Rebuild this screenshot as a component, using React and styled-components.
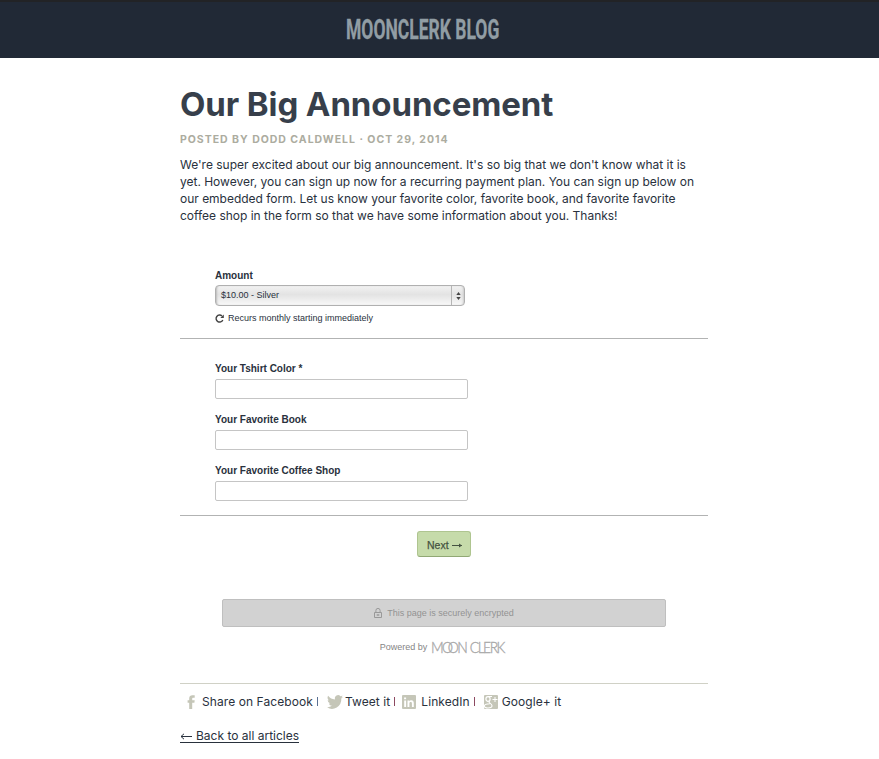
import React from 'react';
import styled, { createGlobalStyle } from 'styled-components';

const GlobalStyle = createGlobalStyle`
  * { box-sizing: border-box; }
  body { margin: 0; background: #fff; color: #29313d; font-family: Inter, sans-serif; }
  h1, p { margin: 0; }
`;

const helvetica = '"Liberation Sans", Arial, sans-serif';

const Header = styled.header`
  height: 58px;
  padding: 0 33px 1px 0;
  display: flex;
  align-items: center;
  justify-content: center;
  background: #212936;
  border-top: 2px solid #222326;
`;

const BlogName = styled.span`
  color: #919da4;
  font: 700 28px/55px Roboto, sans-serif;
  white-space: nowrap;
  -webkit-text-stroke: 0.3px #919da4;
  transform: scaleX(0.625);
`;

const Article = styled.main`
  width: 528px;
  margin-left: 180px;
  padding-top: 25px;
`;

const Title = styled.h1`
  font-size: 33px;
  font-weight: 700;
  line-height: 42px;
  letter-spacing: -0.1px;
  color: #373f4b;
`;

const Meta = styled.p`
  margin-top: 7px;
  color: #acaca0;
  font-size: 10.5px;
  font-weight: 700;
  line-height: 16px;
  letter-spacing: 0.98px;
`;

const Copy = styled.p`
  margin-top: 8px;
  font-size: 12px;
  line-height: 17px;
  letter-spacing: -0.012px;
  white-space: nowrap;
`;

const Section = styled.section`
  height: ${(p) => p.$height}px;
  padding: ${(p) => p.$top}px 35px 0;
  border-bottom: 1px solid #b2b3b3;
  font-family: ${helvetica};
`;

const Form = styled.form`
  margin-top: 38px;
`;

const Label = styled.label`
  display: block;
  font-size: 10px;
  font-weight: 700;
  line-height: 14px;
`;

const SelectBox = styled.div`
  display: flex;
  width: 250px;
  height: 21px;
  margin-top: 2px;
  border: 1px solid #b0b0b0;
  border-radius: 4px;
  background: linear-gradient(#f2f2f2, #e3e3e3 45%, #f8f8f8);
  box-shadow: inset 2px 0 2px -1px #bbb, inset -2px 0 2px -1px #ccc;
`;

const SelectValue = styled.span`
  flex: 1;
  padding-left: 5px;
  font-size: 9px;
  line-height: 18px;
`;

const Stepper = styled.span`
  display: flex;
  width: 13px;
  align-items: center;
  justify-content: center;
  border-left: 1px solid #b5b5b5;
`;

const Recurrence = styled.p`
  display: flex;
  align-items: center;
  gap: 4px;
  margin-top: 6px;
  font-size: 9px;
  line-height: 12px;
`;

const Field = styled.div`
  height: 51px;
`;

const TextInput = styled.input`
  display: block;
  width: 253px;
  height: 20px;
  margin: 3px 0 0;
  padding: 0 5px;
  border: 1px solid #c5c5c5;
  border-radius: 2px;
  background: #fff;
  font: 9px ${helvetica};
`;

const Actions = styled.div`
  display: flex;
  flex-direction: column;
  align-items: center;
  height: 167px;
  padding-top: 15px;
  font-family: ${helvetica};
`;

const NextButton = styled.button`
  display: flex;
  align-items: center;
  gap: 3px;
  width: 54px;
  height: 26px;
  padding: 2px 9px 0;
  border: 1px solid #afc590;
  border-bottom-color: #91a875;
  border-radius: 3px;
  background: #c6dbaa;
  color: #455341;
  font: 400 10.5px ${helvetica};
  -webkit-text-stroke: 0.25px #455341;
`;

const SecureBar = styled.div`
  display: flex;
  align-items: center;
  justify-content: center;
  gap: 5px;
  width: 444px;
  height: 28px;
  margin-top: 42px;
  border: 1px solid #bfbfbf;
  border-radius: 2px;
  background: #d2d2d2;
  color: #929292;
  font-size: 9px;
`;

const Powered = styled.div`
  display: flex;
  align-items: center;
  gap: 4px;
  height: 16px;
  margin-top: 12px;
  color: #858585;
  font-size: 9px;
`;

const Wordmark = styled.span`
  display: flex;
  gap: 4px;
  margin-right: -4px;
  color: #a8a8a8;
  font: 300 15.5px/16px Lato, sans-serif;
  letter-spacing: -1.75px;
  -webkit-text-stroke: 0.35px #a8a8a8;
  transform: scaleX(0.9);
  transform-origin: left center;
`;

const Tight = styled.span`
  letter-spacing: -6px;
`;

const ShareRow = styled.nav`
  display: flex;
  align-items: center;
  height: 36px;
  padding-left: 7px;
  border-top: 1px solid #d0d1c6;
  font-size: 12px;
  letter-spacing: 0.08px;
  white-space: nowrap;
`;

const ShareLink = styled.a`
  display: flex;
  align-items: center;
  gap: ${(p) => p.$gap}px;
`;

const Bar = styled.i`
  width: 1px;
  height: 9px;
  margin: 0 ${(p) => p.$after}px 0 ${(p) => p.$before}px;
  background: ${(p) => p.$color};
`;

const BackLink = styled.a`
  display: inline-flex;
  align-items: center;
  gap: 4px;
  height: 14px;
  margin-top: 10px;
  padding-top: 1px;
  border-bottom: 1px solid #29313d;
  font-size: 12px;
  line-height: 14px;
  white-space: nowrap;
`;

const Icon = styled.svg`
  display: block;
  flex: none;
  overflow: visible;
`;

const questions = ['Your Tshirt Color *', 'Your Favorite Book', 'Your Favorite Coffee Shop'];

function StepIcon() {
  return (
    <Icon width="5" height="8" viewBox="0 0 5 8" fill="#444">
      <path d="M2.5 0 4.7 3H.3zM.3 5h4.4L2.5 8z" />
    </Icon>
  );
}

function RepeatIcon() {
  return (
    <Icon width="9" height="9" viewBox="0 0 9 9">
      <path d="M7 2A3.5 3.5 0 1 0 7.8 6" fill="none" stroke="#444" strokeWidth="1.4" />
      <path d="M8.8.4v3.5H5.3z" fill="#444" />
    </Icon>
  );
}

function LockIcon() {
  return (
    <Icon width="8" height="11" viewBox="0 0 8 11" fill="none" stroke="#999">
      <path d="M1.9 4.2V2.5a2.1 2.1 0 0 1 4.2 0v1.7M.5 4.5h7v5h-7z" />
      <path d="M2.7 7h2.6" strokeWidth="1.4" />
    </Icon>
  );
}

function ArrowIcon({ width, color, back }) {
  return (
    <Icon width={width} height="6" viewBox={`0 0 ${width} 6`} fill="none" stroke={color}>
      <path d={back ? `M${width} 3.5H1M4 .8 1 3.5 4 6.2` : `M0 3.5h${width}`} />
      {!back && <path d={`M${width - 3} 1.5 ${width} 3.5 ${width - 3} 5.5z`} fill={color} stroke="none" />}
    </Icon>
  );
}

function FacebookIcon() {
  return (
    <Icon width="8" height="14" viewBox="0 0 8 14" fill="#c5c6b8">
      <path d="M2.2 14V7.7H.6V5.2h1.6V3.5C2.2 1.3 3.4.2 5.4.2h2.3v2.6H6.3c-.8 0-1.1.3-1.1 1v1.4h2.5l-.3 2.5H5.2V14z" />
    </Icon>
  );
}

function TwitterIcon() {
  return (
    <Icon width="16" height="14" viewBox="0 2 24 20" preserveAspectRatio="none" fill="#c5c6b8">
      <path d="M24 4.6a10 10 0 0 1-2.8.8 5 5 0 0 0 2.1-2.7 10 10 0 0 1-3.1 1.2 4.9 4.9 0 0 0-8.4 4.5A14 14 0 0 1 1.7 3.1a4.9 4.9 0 0 0 1.5 6.6 5 5 0 0 1-2.2-.6v.1a4.9 4.9 0 0 0 3.9 4.8 5 5 0 0 1-2.2.1 4.9 4.9 0 0 0 4.6 3.4A10 10 0 0 1 0 19.5 14 14 0 0 0 21.5 7z" />
    </Icon>
  );
}

function LinkedInIcon() {
  return (
    <Icon width="14" height="14" viewBox="0 0 14 14">
      <rect width="14" height="14" rx="1" fill="#c5c6b8" />
      <path d="M2.2 5.5h1.9V12H2.2zM2.1 2.4h2v1.9h-2zM5.5 5.5h1.8v.9c.9-1.6 4.5-1.5 4.5 1.5V12H9.9V8.4c0-1.8-2.5-1.7-2.5 0V12H5.5z" fill="#fff" />
    </Icon>
  );
}

function GooglePlusIcon() {
  return (
    <Icon width="14" height="14" viewBox="0 0 14 14">
      <path d="M0 1q0-1 1-1h12q1 0 1 1v12q0 1-1 1H1q-1 0-1-1z" fill="#c5c6b8" />
      <g fill="none" stroke="#fff">
        <ellipse cx="4" cy="4" rx="2.1" ry="2.4" strokeWidth="1.2" />
        <path d="M4 1.5h4M5.6 6.2C3.6 8 8.1 8.3 8 10.7 8 13.6 0 13.8.3 11 .5 8.8 3.7 8.8 5.8 8.8" strokeWidth="1.1" />
        <path d="M11 2v5M8.5 4.5h5" />
      </g>
    </Icon>
  );
}

export default function App() {
  return (
    <>
      <GlobalStyle />
      <Header><BlogName>MOONCLERK BLOG</BlogName></Header>
      <Article>
        <Title>Our Big Announcement</Title>
        <Meta>POSTED BY DODD CALDWELL · OCT 29, 2014</Meta>
        <Copy>
          We're super excited about our big announcement. It's so big that we don't know what it is<br />
          yet. However, you can sign up now for a recurring payment plan. You can sign up below on<br />
          our embedded form. Let us know your favorite color, favorite book, and favorite favorite<br />
          coffee shop in the form so that we have some information about you. Thanks!
        </Copy>
        <Form>
          <Section $height={77} $top={7}>
            <Label>Amount</Label>
            <SelectBox>
              <SelectValue>$10.00 - Silver</SelectValue>
              <Stepper><StepIcon /></Stepper>
            </SelectBox>
            <Recurrence><RepeatIcon />Recurs monthly starting immediately</Recurrence>
          </Section>
          <Section $height={177} $top={23}>
            {questions.map((q) => (
              <Field key={q}>
                <Label>{q}</Label>
                <TextInput />
              </Field>
            ))}
          </Section>
          <Actions>
            <NextButton type="button">Next<ArrowIcon width={10} color="#455341" /></NextButton>
            <SecureBar><LockIcon />This page is securely encrypted</SecureBar>
            <Powered>
              Powered by
              <Wordmark><span>M<Tight>O</Tight>ON</span><span>CLERK</span></Wordmark>
            </Powered>
          </Actions>
        </Form>
        <ShareRow>
          <ShareLink $gap={7}><FacebookIcon />Share on Facebook</ShareLink>
          <Bar $before={4} $after={9} $color="#5c7193" />
          <ShareLink $gap={2}><TwitterIcon />Tweet it</ShareLink>
          <Bar $before={4} $after={7} $color="#8c4860" />
          <ShareLink $gap={5}><LinkedInIcon />LinkedIn</ShareLink>
          <Bar $before={4} $after={9} $color="#8c4860" />
          <ShareLink $gap={4}><GooglePlusIcon />Google+ it</ShareLink>
        </ShareRow>
        <BackLink><ArrowIcon width={12} color="#29313d" back />Back to all articles</BackLink>
      </Article>
    </>
  );
}
